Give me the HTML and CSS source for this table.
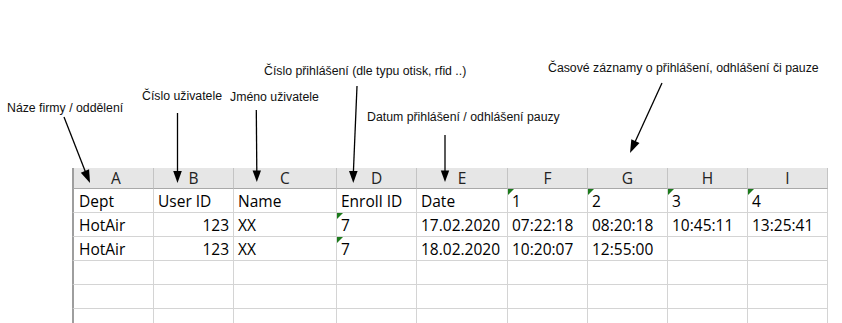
FILE: index.html
```html
<!DOCTYPE html>
<html lang="cs">
<head>
<meta charset="utf-8">
<title>Docházka – popis sloupců</title>
<link rel="stylesheet" href="styles.css">
</head>
<body>
<div class="page">
  <div class="notes">
    <div class="note n-dept">Náze firmy / oddělení</div>
    <div class="note n-uid">Číslo uživatele</div>
    <div class="note n-name">Jméno uživatele</div>
    <div class="note n-enroll">Číslo přihlášení (dle typu otisk, rfid ..)</div>
    <div class="note n-date">Datum přihlášení / odhlášení pauzy</div>
    <div class="note n-times">Časové záznamy o přihlášení, odhlášení či pauze</div>
    <svg class="arrows" width="842" height="323" viewBox="0 0 842 323">
      <g stroke="#000" stroke-width="1.3" fill="none">
        <line x1="64" y1="117" x2="85.5" y2="172"/>
        <line x1="177.5" y1="113" x2="177.5" y2="172"/>
        <line x1="256.3" y1="110" x2="256.8" y2="172"/>
        <line x1="357" y1="86" x2="353.4" y2="172"/>
        <line x1="445" y1="135" x2="445" y2="172"/>
        <line x1="662" y1="83" x2="635" y2="142"/>
      </g>
      <g fill="#000">
        <polygon points="80.8,172.8 89.1,169.3 90,183"/>
        <polygon points="173.2,171 181.8,171 177.5,183"/>
        <polygon points="252.6,170.5 261,170.5 256.8,182"/>
        <polygon points="349,171 357.6,171 353.3,183"/>
        <polygon points="440.8,170.5 449.2,170.5 445,182"/>
        <polygon points="639.5,143.1 631.3,139.3 630,153"/>
      </g>
    </svg>
  </div>

  <div class="sheet">
    <div class="hd">A</div><div class="hd">B</div><div class="hd">C</div><div class="hd">D</div><div class="hd">E</div><div class="hd">F</div><div class="hd">G</div><div class="hd">H</div><div class="hd">I</div>

    <div class="c">Dept</div><div class="c">User ID</div><div class="c">Name</div><div class="c">Enroll ID</div><div class="c">Date</div><div class="c tri">1</div><div class="c tri">2</div><div class="c tri">3</div><div class="c tri">4</div>

    <div class="c">HotAir</div><div class="c num">123</div><div class="c">XX</div><div class="c tri">7</div><div class="c">17.02.2020</div><div class="c">07:22:18</div><div class="c">08:20:18</div><div class="c">10:45:11</div><div class="c">13:25:41</div>

    <div class="c">HotAir</div><div class="c num">123</div><div class="c">XX</div><div class="c tri">7</div><div class="c">18.02.2020</div><div class="c">10:20:07</div><div class="c">12:55:00</div><div class="c"></div><div class="c"></div>

    <div class="c"></div><div class="c"></div><div class="c"></div><div class="c"></div><div class="c"></div><div class="c"></div><div class="c"></div><div class="c"></div><div class="c"></div>
    <div class="c"></div><div class="c"></div><div class="c"></div><div class="c"></div><div class="c"></div><div class="c"></div><div class="c"></div><div class="c"></div><div class="c"></div>
    <div class="c"></div><div class="c"></div><div class="c"></div><div class="c"></div><div class="c"></div><div class="c"></div><div class="c"></div><div class="c"></div><div class="c"></div>
  </div>
</div>
</body>
</html>
```

FILE: styles.css
```css
* { box-sizing: border-box; }
html, body {
  margin: 0;
  padding: 0;
  background: #fff;
  width: 842px;
  height: 323px;
  overflow: hidden;
}
.page {
  position: relative;
  width: 842px;
  height: 323px;
  padding: 168px 0 0 72px;
}
.notes {
  position: absolute;
  left: 0;
  top: 0;
  width: 842px;
  height: 323px;
  pointer-events: none;
  z-index: 2;
}
.note {
  position: absolute;
  font-family: "Liberation Sans", Arial, sans-serif;
  font-size: 12.3px;
  line-height: 14px;
  color: #111;
  white-space: nowrap;
}
.n-dept { left: 7px; top: 101px; }
.n-uid { left: 142px; top: 89px; }
.n-name { left: 230px; top: 90px; }
.n-enroll { left: 264px; top: 64px; }
.n-date { left: 367px; top: 110px; }
.n-times { left: 548px; top: 61px; }
.arrows {
  position: absolute;
  left: 0;
  top: 0;
}

.sheet {
  display: grid;
  grid-template-columns: 82px 80px 103px 80px 91px 80px 80px 80px 80px;
  grid-auto-rows: 24px;
  grid-template-rows: 21px;
  width: 756px;
  font-family: "Open Sans", "Noto Sans", sans-serif;
  font-size: 15.5px;
  color: #000;
}
.hd {
  background: #e6e6e6;
  border-right: 1px solid #c4c4c4;
  border-bottom: 1px solid #a9a9a9;
  display: flex;
  align-items: center;
  justify-content: center;
  line-height: 20px;
  color: #222;
  font-size: 15.5px;
}
.c {
  position: relative;
  border-right: 1px solid #d4d4d4;
  border-bottom: 1px solid #d4d4d4;
  display: flex;
  align-items: flex-end;
  padding: 0 4px;
  line-height: 21px;
  white-space: nowrap;
  overflow: visible;
}
.hd:nth-child(9n+1), .c:nth-child(9n+1) {
  border-left: 2px solid #9e9e9e;
  padding-left: 5px;
}
.num { justify-content: flex-end; }
.tri::before {
  content: "";
  position: absolute;
  left: 0;
  top: 0;
  width: 0;
  height: 0;
  border-top: 6px solid #1c7a1c;
  border-right: 6px solid transparent;
}
```
